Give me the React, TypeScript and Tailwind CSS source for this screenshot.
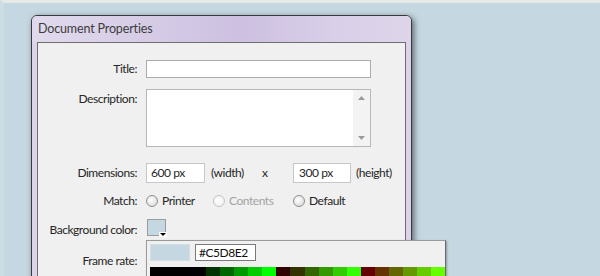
import React from "react";

const palette = [
  "#000000", "#000000", "#000000", "#000000",
  "#003300", "#006600", "#009900", "#00cc00", "#00ff00",
  "#330000", "#333300", "#336600", "#339900", "#33cc00", "#33ff00",
  "#660000", "#663300", "#666600", "#669900", "#66cc00", "#66ff00",
];

function Radio({ label, disabled }: { label: string; disabled?: boolean }) {
  return (
    <div className="flex items-center">
      <div
        className={
          disabled
            ? "w-[12px] h-[12px] rounded-full border border-[#c4c4c4] bg-[radial-gradient(circle_at_40%_40%,#ffffff,#ececec)]"
            : "w-[12px] h-[12px] rounded-full border border-[#8e8f8f] bg-[radial-gradient(circle_at_40%_40%,#ffffff,#d2d2d2)]"
        }
      />
      <span className={disabled ? "ml-[4px] text-[#a3a3a3]" : "ml-[4px]"}>{label}</span>
    </div>
  );
}

export default function App() {
  return (
    <div className="w-[600px] h-[276px] overflow-hidden bg-[#c5d8e2] border-t-[3px] border-t-[#e6e9e8] border-l-[4px] border-l-[#cddde4] font-['Lato',sans-serif] text-[12px] tracking-[-0.45px] text-[#262626] leading-[16px]">
      <div className="ml-[27px] mt-[12px] w-[381px] h-[300px] flex flex-col border border-[#3a3a3a] rounded-t-[6px] bg-[#dcd3ea] shadow-[2px_2px_6px_rgba(0,0,0,0.55)]">
        <div className="h-[26px] shrink-0 flex items-center pl-[6px] rounded-t-[5px] bg-[linear-gradient(to_right,#e1daec_0%,#d6cce6_30%,#cdc0e1_55%,#d9cfe8_80%,#ded5ea_100%)] text-[#3c3c3c] text-[12.5px] tracking-[-0.15px]">
          Document Properties
        </div>
        <div className="flex-1 mx-[5px] border border-[#6e6e6e] bg-[#f0f0f0] flex flex-col">
          {/* Title */}
          <div className="mt-[17px] flex items-center h-[18px]">
            <div className="w-[99px] text-right">Title:</div>
            <div className="ml-[9px] w-[225px] h-[18px] bg-white border border-[#a9abb0]" />
          </div>
          {/* Description */}
          <div className="mt-[11px] flex items-start">
            <div className="w-[99px] text-right pt-[2px]">Description:</div>
            <div className="ml-[9px] w-[225px] h-[58px] bg-white border border-[#b5b7bb] flex justify-end">
              <div className="w-[17px] h-full bg-[#f3f3f3] flex flex-col items-center justify-between py-[6px]">
                <svg width="7" height="4" viewBox="0 0 7 4">
                  <path d="M0 4 L3.5 0 L7 4 Z" fill="#9a9a9a" />
                </svg>
                <svg width="7" height="4" viewBox="0 0 7 4">
                  <path d="M0 0 L3.5 4 L7 0 Z" fill="#9a9a9a" />
                </svg>
              </div>
            </div>
          </div>
          {/* Dimensions */}
          <div className="mt-[16px] flex items-center h-[20px]">
            <div className="w-[99px] text-right">Dimensions:</div>
            <div className="ml-[9px] w-[59px] h-[20px] bg-white border border-[#c5c7cb] pl-[4px] flex items-center">600 px</div>
            <div className="ml-[6px] w-[51px]">(width)</div>
            <div className="w-[31px]">x</div>
            <div className="w-[58px] h-[20px] bg-white border border-[#c5c7cb] pl-[5px] flex items-center">300 px</div>
            <div className="ml-[5px]">(height)</div>
          </div>
          {/* Match */}
          <div className="mt-[9px] flex items-center h-[18px]">
            <div className="w-[99px] text-right">Match:</div>
            <div className="ml-[9px] w-[67px]">
              <Radio label="Printer" />
            </div>
            <div className="w-[80px]">
              <Radio label="Contents" disabled />
            </div>
            <Radio label="Default" />
          </div>
          {/* Background color */}
          <div className="mt-[9px] flex items-center h-[18px]">
            <div className="w-[99px] text-right pt-[3px]">Background color:</div>
            <div className="ml-[9px] relative h-[18px]">
              <div className="ml-[1px] w-[19px] h-[17px] border border-[#9c9c9c] bg-[#c5d8e2] relative">
                <div className="absolute right-[-2px] bottom-[-2px] w-[8px] h-[5px] bg-white flex items-center justify-center">
                  <svg width="6" height="3" viewBox="0 0 6 3">
                    <path d="M0 0 L6 0 L3 3 Z" fill="#000" />
                  </svg>
                </div>
              </div>
              {/* Color picker popup */}
              <div className="absolute left-0 top-[21px] z-10 w-[300px] h-[60px] border border-[#9a9a9a] border-r-[#6a6a6a] bg-[#f0f0f0] pt-[3px] pl-[3px] shadow-[1px_1px_2px_rgba(0,0,0,0.3)]">
                <div className="flex">
                  <div className="w-[40px] h-[17px] bg-[#c5d8e2] border border-[#d3dee5]" />
                  <div className="ml-[5px] w-[61px] h-[17px] bg-white border border-[#7a7a7a] pl-[3px] flex items-center text-[#111]">
                    #C5D8E2
                  </div>
                </div>
                <div className="mt-[6px] w-[295px] flex">
                  {palette.map((c, i) => (
                    <div key={i} className="flex-1 h-[12px]" style={{ backgroundColor: c }} />
                  ))}
                </div>
              </div>
            </div>
          </div>
          {/* Frame rate */}
          <div className="mt-[15px] flex items-center h-[18px]">
            <div className="w-[99px] text-right">Frame rate:</div>
          </div>
        </div>
      </div>
    </div>
  );
}
